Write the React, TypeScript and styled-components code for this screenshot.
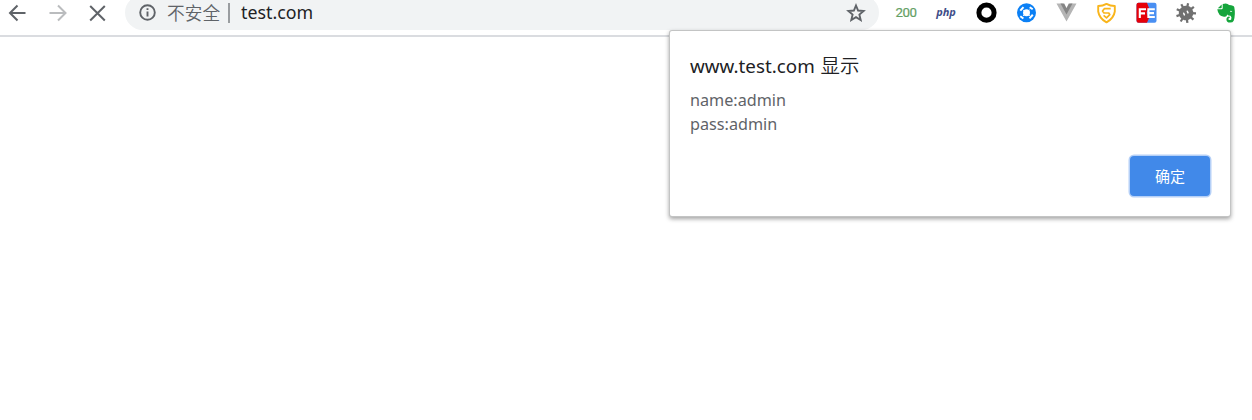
import React from "react";
import styled, { createGlobalStyle } from "styled-components";

const Global = createGlobalStyle`
  * { box-sizing: border-box; }
  body {
    margin: 0;
    background: #fff;
    overflow: hidden;
    font-family: "Noto Sans", "Noto Sans CJK SC", sans-serif;
  }
`;

const Page = styled.main`
  height: 420px;
  background: #fff;
`;

const Toolbar = styled.header`
  display: flex;
  height: 37px;
  overflow: hidden;
  border-bottom: 2px solid #dadce0;
`;

const Navigation = styled.nav`
  display: flex;
  width: 125px;
  height: 25px;
  padding-left: 8px;
  gap: 20px;
  align-items: center;
`;

const IconButton = styled.button`
  width: 20px;
  height: 20px;
  padding: 0;
  border: 0;
  background: none;
  display: flex;
  flex: none;
`;

const AddressBar = styled.div`
  display: flex;
  align-items: center;
  width: 754px;
  height: 35px;
  margin-top: -5px;
  padding: 0 13px 0 13px;
  border-radius: 18px;
  background: #f1f3f4;
`;

const Security = styled.span`
  margin-left: 10px;
  padding-bottom: 2px;
  width: 61px;
  color: #5f6368;
  font: 350 17.7px/26px "Noto Sans CJK SC", sans-serif;
  white-space: nowrap;
`;

const Divider = styled.span`
  width: 2px;
  height: 20px;
  margin-right: 11px;
  background: #9a9da0;
`;

const Url = styled.span`
  flex: 1;
  padding-bottom: 2px;
  color: #202124;
  font-size: 17.8px;
  line-height: 26px;
`;

const Extensions = styled.div`
  display: flex;
  width: 360px;
  height: 25px;
  margin-left: 7px;
  align-items: center;
`;

const Extension = styled.div`
  display: flex;
  width: 40px;
  height: 24px;
  align-items: center;
  justify-content: center;
`;

const Status = styled.span`
  color: #64a064;
  font: 400 13.3px/20px Roboto, sans-serif;
  letter-spacing: -0.4px;
  -webkit-text-stroke: 0.2px #64a064;
`;

const Php = styled.span`
  color: #404d88;
  font: italic 700 11px/18px "Open Sans", sans-serif;
  padding-bottom: 2px;
`;

const Dialog = styled.section`
  position: absolute;
  top: 31px;
  left: 670px;
  width: 560px;
  height: 185px;
  padding: 21px 20px 20px;
  display: flex;
  flex-direction: column;
  border-radius: 2px;
  background: #fff;
  box-shadow: 0 0 0 1px #c3c4c4, 0 2px 4px 1px rgba(0, 0, 0, 0.36);
`;

const Title = styled.h1`
  margin: 0;
  color: #202124;
  font-size: 18.8px;
  font-weight: 400;
  line-height: 28px;
`;

const TitleNote = styled.span`
  margin-left: 1px;
  font-size: 19.4px;
  font-weight: 350;
`;

const Message = styled.div`
  margin-top: 8px;
  color: #5f6368;
  font-size: 16.2px;
  line-height: 24px;
`;

const Confirm = styled.button`
  width: 80px;
  height: 40px;
  margin-top: auto;
  align-self: flex-end;
  padding: 0;
  border: 0;
  border-radius: 4px;
  background: #4189e9;
  box-shadow: 0 0 0 1.5px #b5d0f7;
  color: #fff;
  font: 400 15px/40px "Noto Sans CJK SC", sans-serif;
`;

const Arrow = ({ forward = false }: { forward?: boolean }) => (
  <svg width="20" height="20" viewBox="0 0 20 20" fill="none" stroke={forward ? "#babcbe" : "#5f6368"} strokeWidth="2">
    <path d={forward ? "M1.5 10H17M10 2.5L17.5 10L10 17.5" : "M17.5 10H2M9.5 2.5L2 10L9.5 17.5"} />
  </svg>
);

const Logo = ({ children }: { children: React.ReactNode }) => (
  <svg width="22" height="22" viewBox="0 0 22 22">{children}</svg>
);

const toothAngles = [0, 40, 80, 120, 160, 200, 240, 280, 320];

export default function App() {
  return (
    <Page>
      <Global />
      <Toolbar>
        <Navigation>
          <IconButton aria-label="Back"><Arrow /></IconButton>
          <IconButton aria-label="Forward"><Arrow forward /></IconButton>
          <IconButton aria-label="Stop">
            <svg width="20" height="20" fill="none" stroke="#5f6368" strokeWidth="2"><path d="M2.2 3L16.8 17.5M16.8 3L2.2 17.5" /></svg>
          </IconButton>
        </Navigation>
        <AddressBar>
          <svg width="19" height="19" viewBox="0 0 19 19" fill="none" stroke="#5f6368" strokeWidth="1.9">
            <circle cx="9.5" cy="9.5" r="7.3" /><path d="M9.5 8.5V13.5M9.5 5.3V7" />
          </svg>
          <Security>不安全</Security>
          <Divider />
          <Url>test.com</Url>
          <svg width="20" height="20" viewBox="0 0 20 20" fill="none" stroke="#5f6368" strokeWidth="1.9">
            <path d="M10 2.5L12.1 7.5L17.6 8L13.4 11.6L14.7 17L10 14.1L5.3 17L6.6 11.6L2.4 8L7.9 7.5Z" />
          </svg>
        </AddressBar>
        <Extensions>
          <Extension><Status>200</Status></Extension>
          <Extension><Php>php</Php></Extension>
          <Extension><Logo><circle cx="11.5" cy="10.7" r="7.6" fill="none" stroke="#000" strokeWidth="5" /></Logo></Extension>
          <Extension>
            <Logo>
              <circle cx="11.5" cy="10.8" r="9.5" fill="#0b80f5" />
              <circle cx="11.5" cy="10.8" r="3.5" fill="#fff" />
              <g stroke="#fff" strokeWidth="2" fill="none">
                <path d="M5.3 8.7L8.5 5.2M14.7 5.2L17.7 7.3M17.8 12.8L14.5 16.4M8.4 16.5L5.3 14.2" />
                <path d="M9.3 9L8.1 7.8M13.5 8.8L14.6 7.8M13.6 12.8L14.8 14M9.3 12.8L8.1 14" strokeWidth="1" />
              </g>
            </Logo>
          </Extension>
          <Extension>
            <Logo><path d="M1.5 1.5H7.5L11.5 9L15.5 1.5H21.5L11.5 19.5Z" fill="#b5b5b5" /><path d="M5.5 1.5H9.2L11.5 6L13.8 1.5H17.5L11.5 12.5Z" fill="#858585" /></Logo>
          </Extension>
          <Extension>
            <Logo>
              <g fill="none" stroke="#f9b51b" strokeWidth="1.9" strokeLinejoin="round">
                <path d="M11.5 1.9Q15.2 4 19.8 4V9.5Q18.7 16.5 11.5 20.3Q4.3 16.5 3.2 9.5V4Q7.8 4 11.5 1.9Z" />
                <path d="M15.7 6.7H9.3L7.5 9L9 11H13.8L14.8 12.7L11.5 15.8L8.6 13.4" strokeWidth="1.7" />
              </g>
            </Logo>
          </Extension>
          <Extension>
            <Logo>
              <rect x="1.5" y="0.8" width="20" height="20" rx="2" fill="#498ff2" />
              <path d="M3.5 .8H12L14 6L11.6 10.8L14 16L12 20.8H3.5Q1.5 20.8 1.5 18.8V2.8Q1.5 .8 3.5 .8Z" fill="#e60008" />
              <path d="M4.8 16V7.2H11M4.8 11.4H10M19.8 7.2H13.4V15H19.8M13.4 11.1H19" fill="none" stroke="#fff" strokeWidth="2.1" />
            </Logo>
          </Extension>
          <Extension>
            <Logo>
              <g transform="rotate(12 11 11)">
                <g stroke="#707070" strokeWidth="2.2">
                  {toothAngles.map(angle => <path key={angle} d="M11 1V6" transform={`rotate(${angle} 11 11)`} />)}
                </g>
                <circle cx="11" cy="11" r="7.3" fill="#707070" />
              </g>
              <path d="M8.7 11.3L9.4 12.9M12.3 9.3L13 10.9" fill="none" stroke="#fff" strokeWidth="1.5" strokeLinecap="round" />
            </Logo>
          </Extension>
          <Extension>
            <Logo>
              <path d="M7.7 2Q12 .4 14.1 3Q18.8 3.2 19.3 5.2Q20.7 12.5 18.7 18.7Q17.5 21.2 13.4 20.4Q10.8 19.2 11.6 16.2Q12.4 14.2 14.7 14.7V16.1Q12.9 16 13.4 17.6Q14.6 18.5 16.2 17.5Q17 14.8 15.5 13.8Q13.2 13.5 12.2 12.4Q11.8 15.4 8.9 14.7Q3.2 14.2 2.3 7.3H6.6Q7.7 7.2 7.7 6Z" fill="#15a53c" />
              <path d="M2.8 6.2L6.7 2.5V5.4Q6.7 6.2 5.9 6.2Z" fill="#15a53c" />
              <path d="M15 9.9Q15.6 7.5 17.3 10.1Q16 9.7 15 9.9" fill="#fff" />
            </Logo>
          </Extension>
        </Extensions>
      </Toolbar>
      <Dialog role="dialog" aria-label="www.test.com 显示">
        <Title>www.test.com <TitleNote>显示</TitleNote></Title>
        <Message>name:admin<br />pass:admin</Message>
        <Confirm>确定</Confirm>
      </Dialog>
    </Page>
  );
}
